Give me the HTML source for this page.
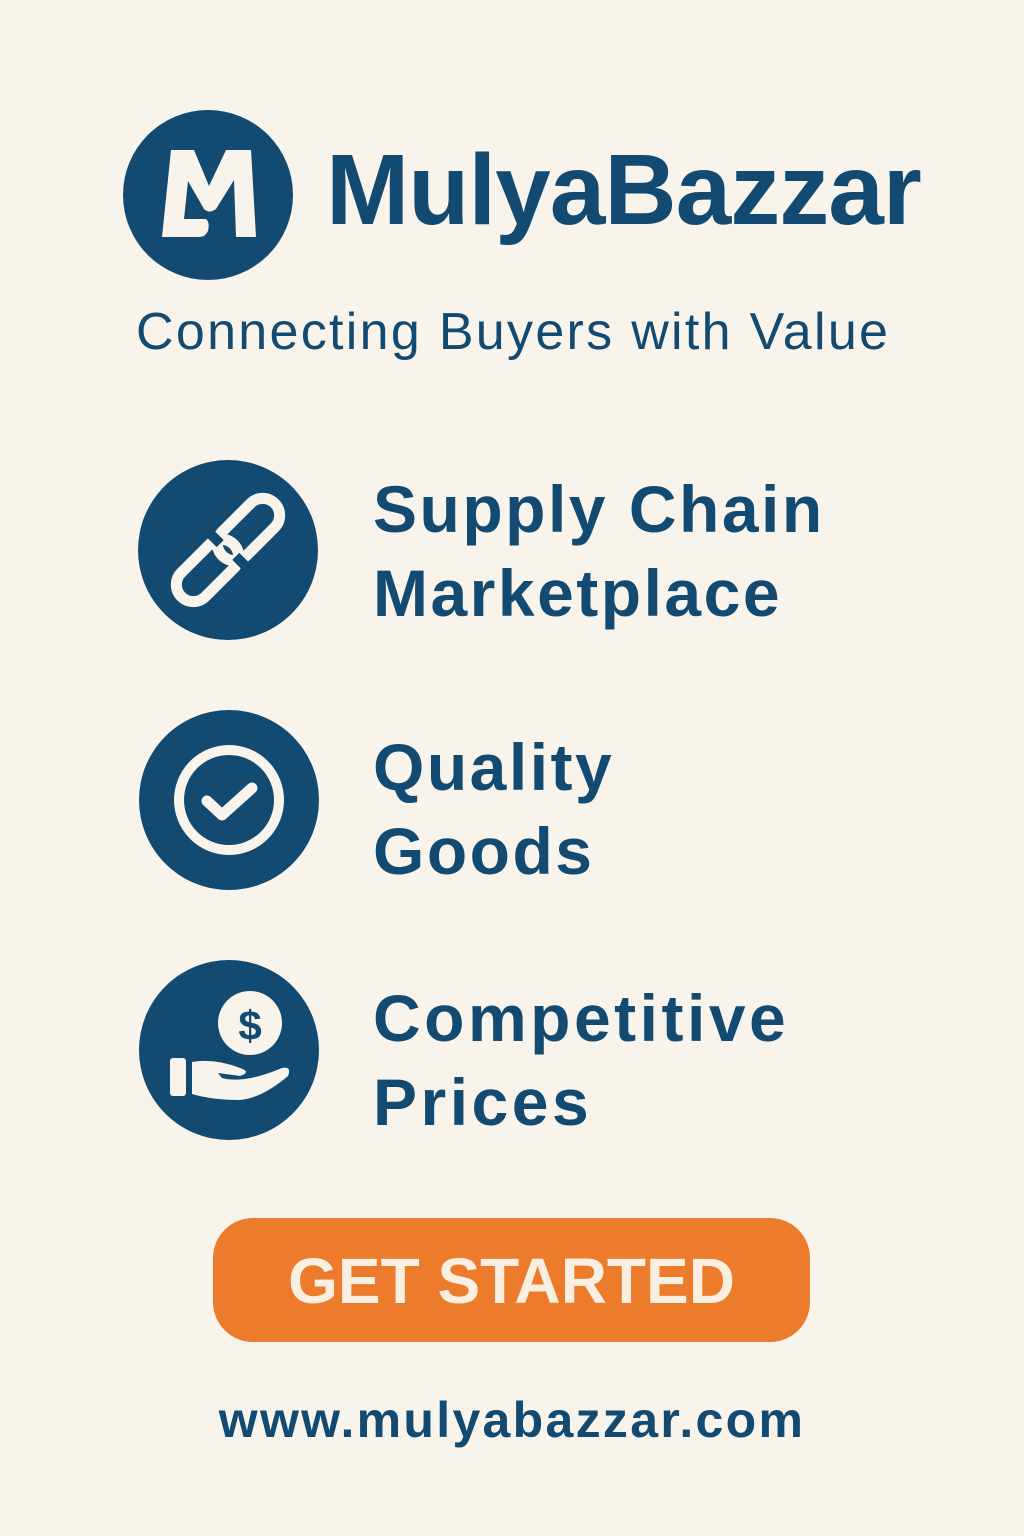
<!DOCTYPE html>
<html><head><meta charset="utf-8"><style>
body{margin:0;width:1024px;height:1536px;background:#f8f4eb;font-family:"Liberation Sans",sans-serif;color:#134a72;position:relative;overflow:hidden}
.a{position:absolute;white-space:nowrap}
.f{font-weight:bold;font-size:66px;line-height:84px;left:373px;letter-spacing:2.5px}
</style></head><body>
<svg class="a" style="left:0;top:0" width="1024" height="1536">
<circle cx="208" cy="195" r="85" fill="#134a72"/>
<path d="M171 150 L194 150 L209 186 L226 150 L251 150 L256 237 L236 237 L234 180 L216 209 Q209 214 204 209 L188 181 L184 219 L206 219 Q210 222 208 231 Q205 237 200 237 L162 237 Z" fill="#f8f4eb"/>
<circle cx="228" cy="550" r="90" fill="#134a72"/>
<g transform="translate(228 550) rotate(-45)" fill="none" stroke="#f8f4eb" stroke-width="11">
<rect x="-8" y="-17" width="74" height="34" rx="17"/>
<rect x="-66" y="-17" width="74" height="34" rx="17"/>
<path d="M-6 -17 L4 -17" stroke="#134a72" stroke-width="14"/>
<path d="M-4 17 L6 17" stroke="#134a72" stroke-width="14"/>
</g>
<circle cx="229" cy="800" r="90" fill="#134a72"/>
<circle cx="229" cy="800" r="50" fill="none" stroke="#f8f4eb" stroke-width="10"/>
<path d="M207 801 L222 815 L252 788" fill="none" stroke="#f8f4eb" stroke-width="11" stroke-linecap="round" stroke-linejoin="round"/>
<circle cx="229" cy="1050" r="90" fill="#134a72"/>
<circle cx="250" cy="1023" r="32" fill="#f8f4eb"/>
<text x="250" y="1040" text-anchor="middle" font-family="Liberation Sans" font-weight="bold" font-size="42" fill="#134a72">$</text>
<rect x="170" y="1058" width="16" height="38" rx="3" fill="#f8f4eb"/>
<path d="M192 1062 Q215 1058 240 1068 Q252 1072 240 1076 L218 1073 L222 1078 Q244 1084 282 1068 Q292 1066 288 1076 Q262 1098 240 1100 Q212 1100 192 1094 Z" fill="#f8f4eb"/>
</svg>
<div class="a" style="left:326px;top:135px;font-size:100px;font-weight:bold;line-height:110px;letter-spacing:-1px">MulyaBazzar</div>
<div class="a" style="left:136px;top:302px;font-size:52px;line-height:60px;letter-spacing:2.3px">Connecting Buyers with Value</div>
<div class="a f" style="top:467px">Supply Chain<br>Marketplace</div>
<div class="a f" style="top:725px">Quality<br>Goods</div>
<div class="a f" style="top:976px;letter-spacing:3.5px">Competitive<br>Prices</div>
<div class="a" style="left:213px;top:1218px;width:597px;height:124px;border-radius:40px;background:#ec7b2b;color:#fbefe2;font-weight:bold;font-size:64px;line-height:126px;text-align:center">GET STARTED</div>
<div class="a" style="left:0;width:1024px;text-align:center;top:1390px;font-size:50px;font-weight:bold;line-height:60px;letter-spacing:2.3px">www.mulyabazzar.com</div>
</body></html>
